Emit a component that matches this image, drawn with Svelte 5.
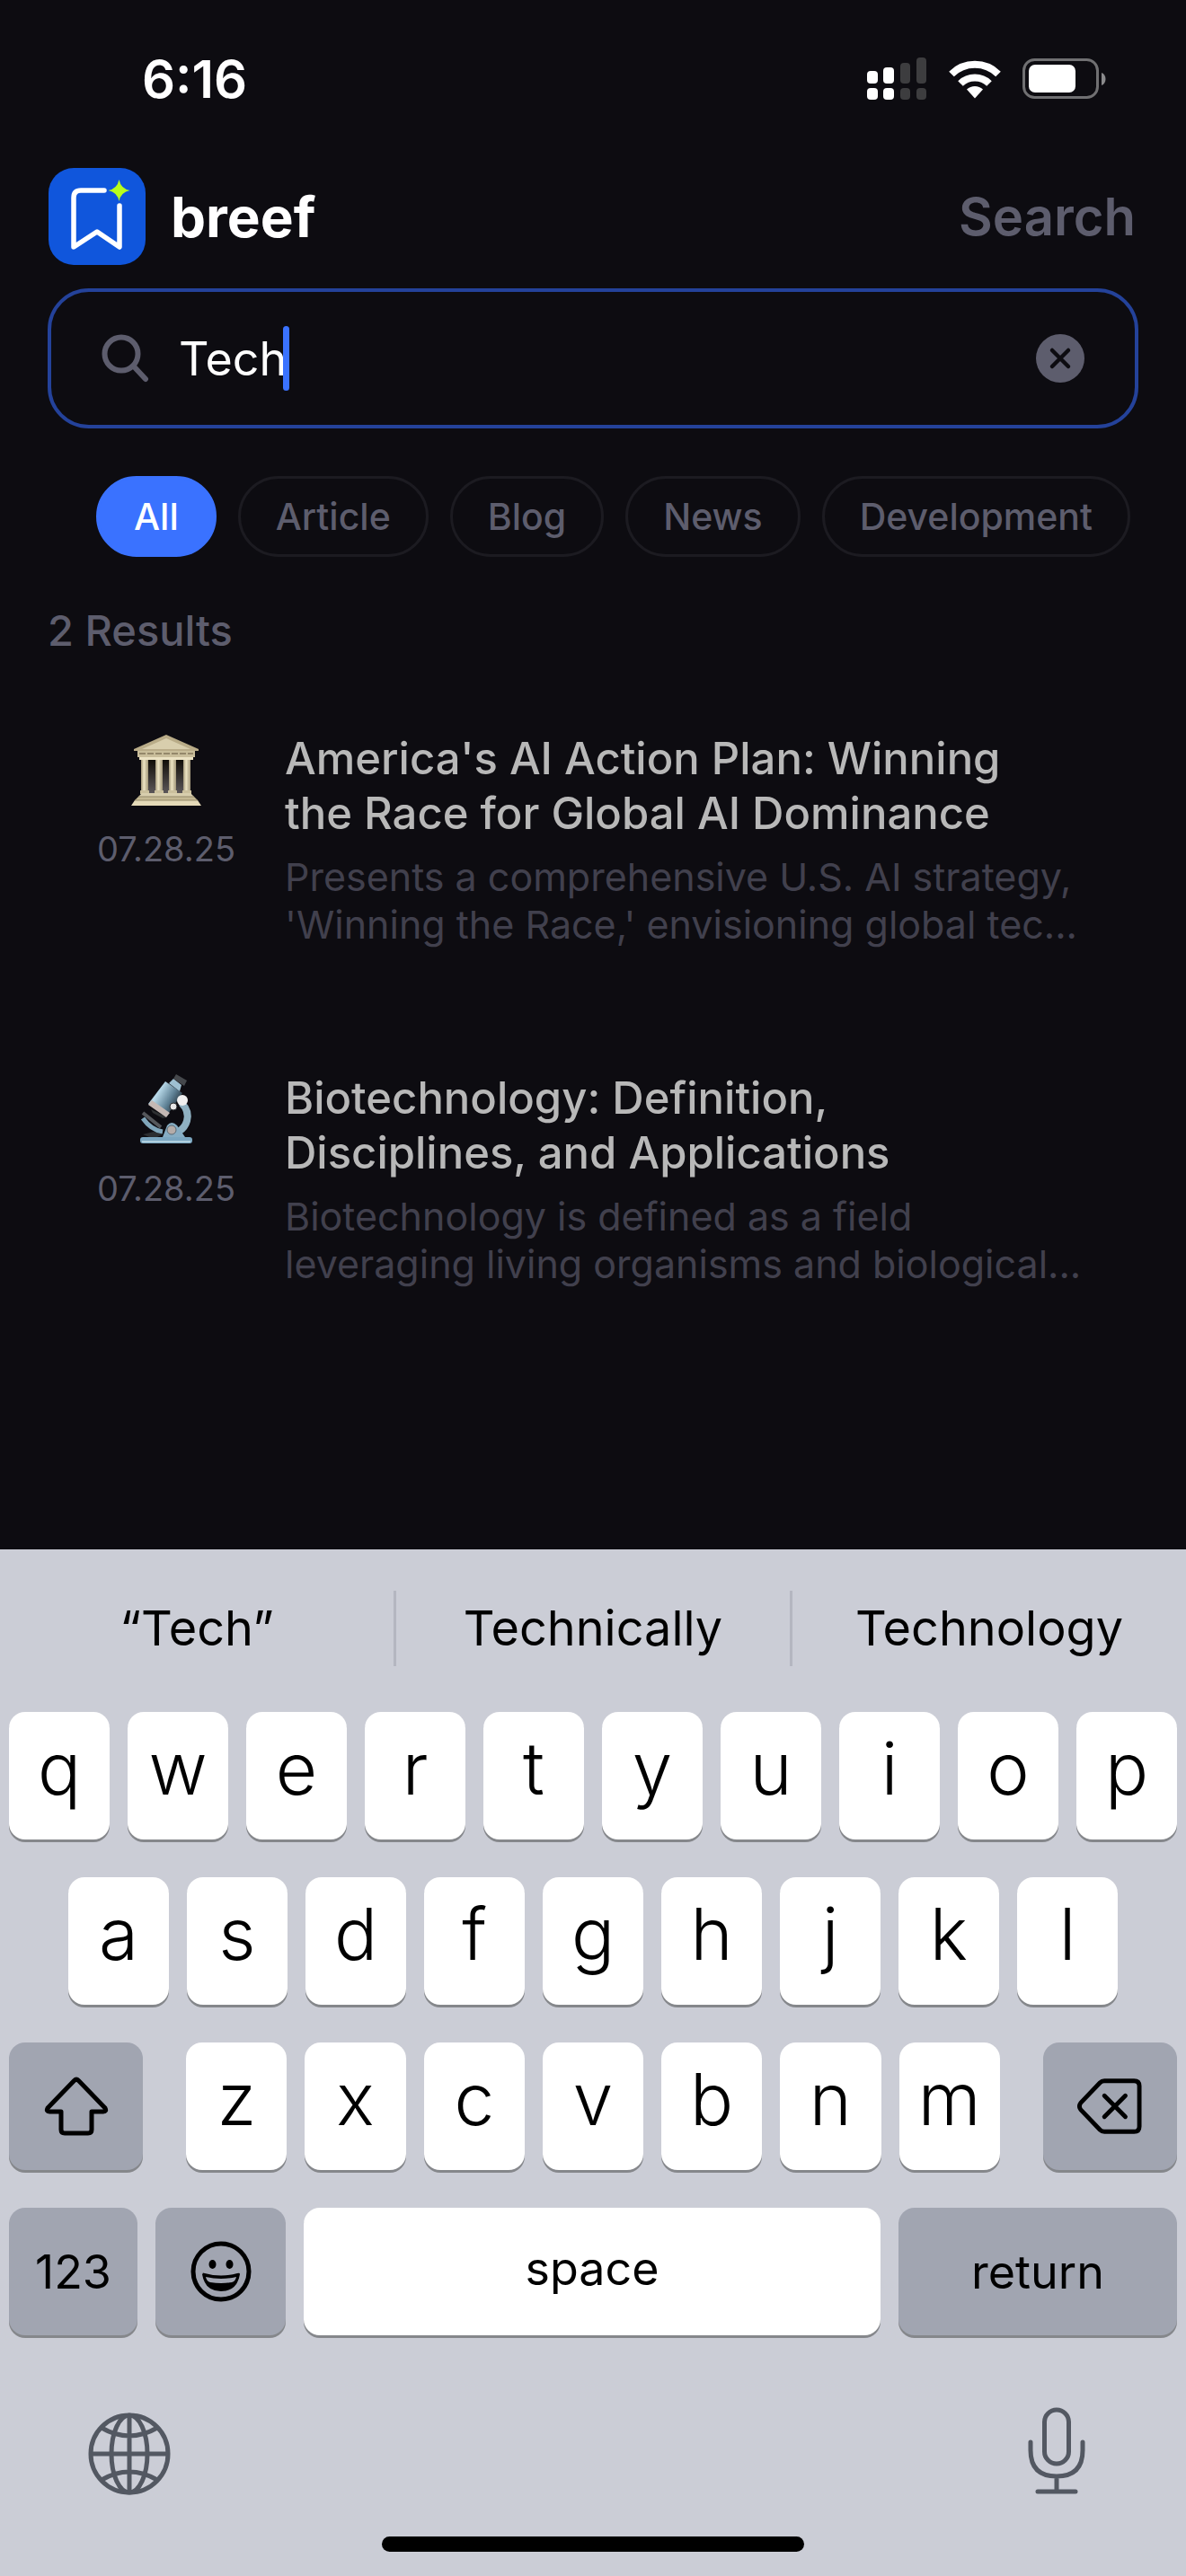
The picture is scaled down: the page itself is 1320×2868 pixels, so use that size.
<script lang="ts">
	interface Result {
		icon: 'temple' | 'microscope';
		date: string;
		title: string;
		summary: string;
	}

	const filters = ['All', 'Article', 'Blog', 'News', 'Development'];

	const results: Result[] = [
		{
			icon: 'temple',
			date: '07.28.25',
			title: "America's AI Action Plan: Winning the Race for Global AI Dominance",
			summary:
				"Presents a comprehensive U.S. AI strategy, 'Winning the Race,' envisioning global tec..."
		},
		{
			icon: 'microscope',
			date: '07.28.25',
			title: 'Biotechnology: Definition, Disciplines, and Applications',
			summary: 'Biotechnology is defined as a field leveraging living organisms and biological...'
		}
	];

	const suggestions = ['“Tech”', 'Technically', 'Technology'];
	const topRow = 'qwertyuiop'.split('');
	const middleRow = 'asdfghjkl'.split('');
	const bottomRow = 'zxcvbnm'.split('');

	let query = $state('Tech');
	let active = $state('All');

	function type(text: string) {
		query += text;
	}

	function backspace() {
		query = query.slice(0, -1);
	}
</script>

<div class="screen">
	<div class="status-bar">
		<span class="time">6:16</span>
		<div class="status-icons">
			<svg class="signal" viewBox="0 0 67 48">
				<g fill="#fff">
					<rect x="0" y="15" width="12" height="14" rx="4" />
					<rect x="18" y="11" width="12" height="18" rx="4" />
					<rect x="0" y="34" width="12" height="13" rx="4" />
					<rect x="18" y="34" width="12" height="13" rx="4" />
				</g>
				<g fill="#3d3d3f">
					<rect x="37" y="6" width="11" height="23" rx="4" />
					<rect x="55" y="0" width="11" height="29" rx="4" />
					<rect x="37" y="34" width="11" height="13" rx="4" />
					<rect x="55" y="34" width="11" height="13" rx="4" />
				</g>
			</svg>
			<svg class="wifi" viewBox="0 0 58 44">
				<g fill="none" stroke="#fff" stroke-width="8">
					<path d="M3 16.500a37 37 0 0 1 52 0" />
					<path d="M13 27a23 23 0 0 1 32 0" />
				</g>
				<path d="M29 43.500l-9-10a13 13 0 0 1 18 0z" fill="#fff" />
			</svg>
			<svg class="battery" viewBox="0 0 94 46">
				<rect x="1.500" y="1.500" width="82" height="42" rx="12" fill="none" stroke="#707072" stroke-width="3" />
				<rect x="7" y="7" width="52" height="31" rx="7" fill="#fff" />
				<path d="M88 16c6 2 6 12 0 14z" fill="#8a8a8c" />
			</svg>
		</div>
	</div>

	<header class="app-header">
		<svg class="logo" viewBox="0 0 108 108">
			<rect width="108" height="108" rx="28" fill="#1056dc" />
			<path
				d="M62 25H36q-8 0-8 8v55l26-17 25 17V42"
				fill="none"
				stroke="#fff"
				stroke-width="5.500"
				stroke-linecap="round"
				stroke-linejoin="round"
			/>
			<path d="M78.500 13q2 10 12 12-10 2-12 12-2-10-12-12 10-2 12-12z" fill="#b8ff1c" />
		</svg>
		<span class="brand">breef</span>
		<h1 class="page-title">Search</h1>
	</header>

	<main class="content">
		<div class="search-box">
			<svg class="search-icon" viewBox="0 0 54 54">
				<g fill="none" stroke="#5d5d6d" stroke-width="6" stroke-linecap="round">
					<circle cx="22" cy="22" r="18.500" />
					<path d="M35.500 35.500L49 50" />
				</g>
			</svg>
			<input class="search-input" type="text" size="4" aria-label="Search" bind:value={query} />
			<span class="caret"></span>
			<button type="button" class="clear-btn" aria-label="Clear" onclick={() => (query = '')}>
				<svg viewBox="0 0 54 54">
					<circle cx="27" cy="27" r="27" fill="#5d5d6d" />
					<path
						d="M18 18l18 18M36 18L18 36"
						stroke="#0d0c11"
						stroke-width="4.500"
						stroke-linecap="round"
					/>
				</svg>
			</button>
		</div>

		<div class="filters">
			{#each filters as filter}
				<button
					type="button"
					class="chip"
					class:active={active === filter}
					onclick={() => (active = filter)}>{filter}</button
				>
			{/each}
		</div>

		<h2 class="count">{results.length} Results</h2>

		{#each results as result}
			<article class="result">
				<div class="result-meta">
					{#if result.icon === 'temple'}
						<svg class="emoji" viewBox="0 0 78 80">
							<defs>
								<linearGradient id="column" x1="0" x2="1" y1="0" y2="0">
									<stop offset="0" stop-color="#a2977a" />
									<stop offset="0.400" stop-color="#ede4c4" />
									<stop offset="1" stop-color="#a2977a" />
								</linearGradient>
								<linearGradient id="depth" x1="0" x2="0" y1="0" y2="1">
									<stop offset="0" stop-color="#0e0b06" />
									<stop offset="1" stop-color="#5c5759" />
								</linearGradient>
							</defs>
							<rect x="14" y="27" width="50" height="38" fill="url(#depth)" />
							<path d="M39 0L3 16v2h72v-2z" fill="#b9ac88" />
							<path d="M39 4L12 16h54z" fill="#d8cead" />
							<path d="M7 18h64v7H7z" fill="#c9be9b" />
							<path d="M9 21h60" stroke="#94886a" stroke-width="2" stroke-dasharray="7 2" />
							<path d="M9 25h60v3H9z" fill="#ece3c4" />
							{#each [11, 27, 42, 58] as x}
								<rect {x} y="28" width="8" height="36" fill="url(#column)" />
								<rect x={x - 1} y="62" width="10" height="4" fill="#cbc09d" />
							{/each}
							<path d="M12 65h54l4 4H8z" fill="#d8cead" />
							<path d="M8 69h62l4 4H4z" fill="#c5b994" />
							<path d="M4 73h70l4 6H0z" fill="#e4dab8" />
							<path d="M8 69h62M4 73h70" stroke="#948969" />
						</svg>
					{:else}
						<svg class="emoji" viewBox="-10 0 78 80">
							<defs>
								<linearGradient id="tube" x1="0" x2="1" y1="0" y2="0.600">
									<stop offset="0" stop-color="#7fa5ba" />
									<stop offset="0.350" stop-color="#b8d9e9" />
									<stop offset="0.700" stop-color="#5d7f93" />
									<stop offset="1" stop-color="#1f2a32" />
								</linearGradient>
							</defs>
							<path d="M46 32q9 9 6 20-2 7-8 11" fill="none" stroke="#8fb1c2" stroke-width="8" />
							<path d="M3 67l12-3 10 3-10 5z" fill="#2b2d30" />
							<path d="M3 49q9 13 22 15" fill="none" stroke="#7fa5ba" stroke-width="5" />
							<path d="M3 43l20 16" stroke="#55575b" stroke-width="4" />
							<path d="M12 39l18 9-5 1-11-6z" fill="#2e3032" />
							<path d="M28 8L47 21 29 47 9 33z" fill="url(#tube)" />
							<path d="M13 29l20 14-4 5L9 34z" fill="#c4b8b4" />
							<path d="M37 5l9 7-2 7-12-9z" fill="#9ec0d2" />
							<path d="M40 0l12 7-3 6-12-8z" fill="#45484c" />
							<path d="M25 70l5-13q5-6 11 0l9 13z" fill="#86adc4" />
							<circle cx="35" cy="62" r="5" fill="#b4aca9" stroke="#5c6a74" />
							<circle cx="47" cy="29" r="6" fill="#f0f0f0" />
							<circle cx="37" cy="36" r="4" fill="#e6e6e6" stroke="#2a2d30" />
							<rect x="0" y="70" width="58" height="7" rx="3" fill="#7ba6c0" />
							<path d="M2 75h54" stroke="#b0d0df" stroke-width="2" />
						</svg>
					{/if}
					<time class="date">{result.date}</time>
				</div>
				<div class="result-text">
					<h3 class="result-title">{result.title}</h3>
					<p class="summary">{result.summary}</p>
				</div>
			</article>
		{/each}
	</main>

	<section class="keyboard" aria-label="Keyboard">
		<div class="suggestions">
			{#each suggestions as word}
				<button type="button" class="suggestion">{word}</button>
			{/each}
		</div>

		<div class="keys">
			<div class="key-row">
				{#each topRow as letter}
					<button type="button" class="key" onclick={() => type(letter)}>{letter}</button>
				{/each}
			</div>
			<div class="key-row inset">
				{#each middleRow as letter}
					<button type="button" class="key" onclick={() => type(letter)}>{letter}</button>
				{/each}
			</div>
			<div class="key-row">
				<button type="button" class="key dark shift" aria-label="Shift">
					<svg class="key-icon" viewBox="0 0 72 64">
						<path
							d="M33.500 3.500q2.500-2.500 5 0L68 34q2 4-2 4H53v20q0 4-4 4H23q-4 0-4-4V38H6q-4 0-2-4z"
							fill="none"
							stroke="#000"
							stroke-width="5"
							stroke-linejoin="round"
						/>
					</svg>
				</button>
				{#each bottomRow as letter}
					<button type="button" class="key" onclick={() => type(letter)}>{letter}</button>
				{/each}
				<button type="button" class="key dark delete" aria-label="Delete" onclick={backspace}>
					<svg class="key-icon" viewBox="0 0 74 64">
						<g
							fill="none"
							stroke="#000"
							stroke-width="5"
							stroke-linecap="round"
							stroke-linejoin="round"
						>
							<path d="M31 3h34q6 0 6 6v46q0 6-6 6H31q-3 0-5-2L4 36q-3-4 0-8L26 5q2-2 5-2z" />
							<path d="M31 20l24 24M55 20L31 44" />
						</g>
					</svg>
				</button>
			</div>
			<div class="key-row">
				<button type="button" class="key dark label numbers">123</button>
				<button type="button" class="key dark emoji-key" aria-label="Emoji">
					<svg class="key-icon" viewBox="0 0 68 68">
						<circle cx="34" cy="34" r="31" fill="none" stroke="#000" stroke-width="5" />
						<ellipse cx="24.500" cy="26" rx="4" ry="5" />
						<ellipse cx="43.500" cy="26" rx="4" ry="5" />
						<path
							fill-rule="evenodd"
							d="M14 36q-1-1 2 0 18 5 36 0 3-1 3 1-3 19-21 19T13 37zM17 40q1 5 5 6 12 2 24 0 4-1 5-6-17 4-34 0z"
						/>
					</svg>
				</button>
				<button type="button" class="key label space" onclick={() => type(' ')}>space</button>
				<button type="button" class="key dark label return">return</button>
			</div>
		</div>

		<div class="system-row">
			<button type="button" class="system-btn" aria-label="Next keyboard">
				<svg class="globe" viewBox="0 0 92 92">
					<g fill="none" stroke="#535862" stroke-width="5">
						<circle cx="46" cy="46" r="43" />
						<ellipse cx="46" cy="46" rx="20" ry="43" />
						<path d="M46 3v86M3 46h86M15 17q31 18 62 0M15 75q31-18 62 0" />
					</g>
				</svg>
			</button>
			<button type="button" class="system-btn" aria-label="Dictate">
				<svg class="mic" viewBox="0 0 64 98">
					<g fill="none" stroke="#535862" stroke-width="5" stroke-linecap="round">
						<rect x="18.500" y="3" width="27" height="60" rx="13.500" />
						<path d="M3 39v9q0 29 29 29t29-29v-9M32 77v16M11 94h42" />
					</g>
				</svg>
			</button>
		</div>
		<div class="home-bar"></div>
	</section>
</div>

<style>
	:global(body) {
		margin: 0;
		background: #0d0c11;
	}

	.screen {
		display: flex;
		flex-direction: column;
		min-height: 100vh;
		background: #0d0c11;
		color: #fff;
		font-family: Inter, 'Liberation Sans', sans-serif;
	}

	button {
		padding: 0;
		border: 0;
		background: none;
		color: inherit;
		font: inherit;
		cursor: pointer;
	}

	svg {
		display: block;
	}

	.status-bar {
		display: flex;
		align-items: center;
		justify-content: space-between;
		height: 48px;
		padding: 64px 88px 0 158px;
	}

	.time {
		font-size: 58px;
		font-weight: 600;
	}

	.status-icons {
		display: flex;
		align-items: center;
		gap: 24px;
	}

	.signal {
		width: 67px;
		height: 48px;
	}

	.wifi {
		width: 58px;
		height: 44px;
	}

	.battery {
		width: 94px;
		height: 46px;
	}

	.app-header {
		display: flex;
		align-items: center;
		padding: 75px 56px 26px 54px;
	}

	.logo {
		width: 108px;
		height: 108px;
	}

	.brand {
		margin-left: 28px;
		font-size: 62px;
		font-weight: 700;
	}

	.page-title {
		margin: 0 0 0 auto;
		color: #5d5d6d;
		font-size: 58px;
		font-weight: 600;
	}

	.content {
		flex: 1;
		padding: 0 53px;
	}

	.search-box {
		display: flex;
		align-items: center;
		box-sizing: border-box;
		height: 156px;
		padding: 0 56px;
		border: 4px solid #24429a;
		border-radius: 46px;
	}

	.search-icon {
		width: 54px;
		height: 54px;
		margin-right: 32px;
	}

	.search-input {
		field-sizing: content;
		padding: 0;
		border: 0;
		outline: 0;
		background: none;
		color: #fff;
		font: inherit;
		font-size: 52px;
		caret-color: transparent;
	}

	.caret {
		width: 7px;
		height: 72px;
		margin-left: -4px;
		border-radius: 4px;
		background: #3a72ff;
	}

	.clear-btn {
		margin-left: auto;
	}

	.clear-btn svg {
		width: 54px;
		height: 54px;
	}

	.filters {
		display: flex;
		gap: 24px;
		padding: 53px 0 0 54px;
	}

	.chip {
		box-sizing: border-box;
		height: 90px;
		padding: 0 39px;
		border: 3px solid #1c1b21;
		border-radius: 45px;
		color: #5d5d6d;
		font-size: 41px;
		font-weight: 500;
	}

	.chip.active {
		border-color: #3a72ff;
		background: #3a72ff;
		color: #fff;
	}

	.count {
		margin: 52px 0 82px;
		color: #5d5d6d;
		font-size: 47px;
		font-weight: 500;
		line-height: 60px;
	}

	.result {
		display: flex;
		gap: 54px;
		padding: 0 54px;
		margin-bottom: 136px;
	}

	.result-meta {
		display: flex;
		flex-direction: column;
		align-items: center;
		width: 156px;
		padding-top: 4px;
	}

	.emoji {
		width: 78px;
		height: 80px;
	}

	.date {
		margin-top: 24px;
		color: #5d5d6d;
		font-size: 38px;
		line-height: 46px;
	}

	.result-text {
		flex: 1;
	}

	.result-title {
		margin: 0;
		padding-right: 54px;
		color: #b8b8b8;
		font-size: 49px;
		font-weight: 500;
		line-height: 61px;
	}

	.summary {
		margin: 14px 0 0;
		color: #41404d;
		font-size: 43px;
		line-height: 53px;
	}

	.keyboard {
		background: #cbcdd6;
		color: #000;
	}

	.suggestions {
		display: flex;
		align-items: center;
		height: 175px;
		padding-bottom: 6px;
	}

	.suggestion {
		flex: 1;
		height: 84px;
		font-size: 54px;
	}

	.suggestion + .suggestion {
		border-left: 3px solid #b4b6c0;
	}

	.keys {
		display: flex;
		flex-direction: column;
		gap: 42px;
		padding: 0 10px;
	}

	.key-row {
		display: flex;
		gap: 20px;
	}

	.key-row.inset {
		padding: 0 66px;
	}

	.key {
		display: flex;
		flex: 112 1 0;
		align-items: center;
		justify-content: center;
		box-sizing: border-box;
		height: 142px;
		padding-bottom: 18px;
		border-radius: 18px;
		background: #fff;
		box-shadow: 0 3px 0 #85878b;
		font-size: 80px;
		font-weight: 300;
	}

	.key.dark {
		padding-bottom: 0;
		background: #a1a5b1;
	}

	.key.label {
		font-size: 52px;
		font-weight: 400;
	}

	.key-icon {
		width: 72px;
		height: 68px;
	}

	.shift {
		flex-grow: 149;
		margin-right: 28px;
	}

	.delete {
		flex-grow: 149;
		margin-left: 28px;
	}

	.numbers {
		flex-grow: 143;
	}

	.emoji-key {
		flex-grow: 145;
	}

	.space {
		flex-grow: 642;
		padding-bottom: 8px;
	}

	.return {
		flex-grow: 310;
	}

	.system-row {
		display: flex;
		align-items: flex-end;
		justify-content: space-between;
		padding: 80px 112px 0 98px;
	}

	.globe {
		width: 92px;
		height: 92px;
	}

	.mic {
		width: 64px;
		height: 98px;
	}

	.home-bar {
		width: 470px;
		height: 17px;
		margin: 46px auto 27px;
		border-radius: 9px;
		background: #000;
	}
</style>
